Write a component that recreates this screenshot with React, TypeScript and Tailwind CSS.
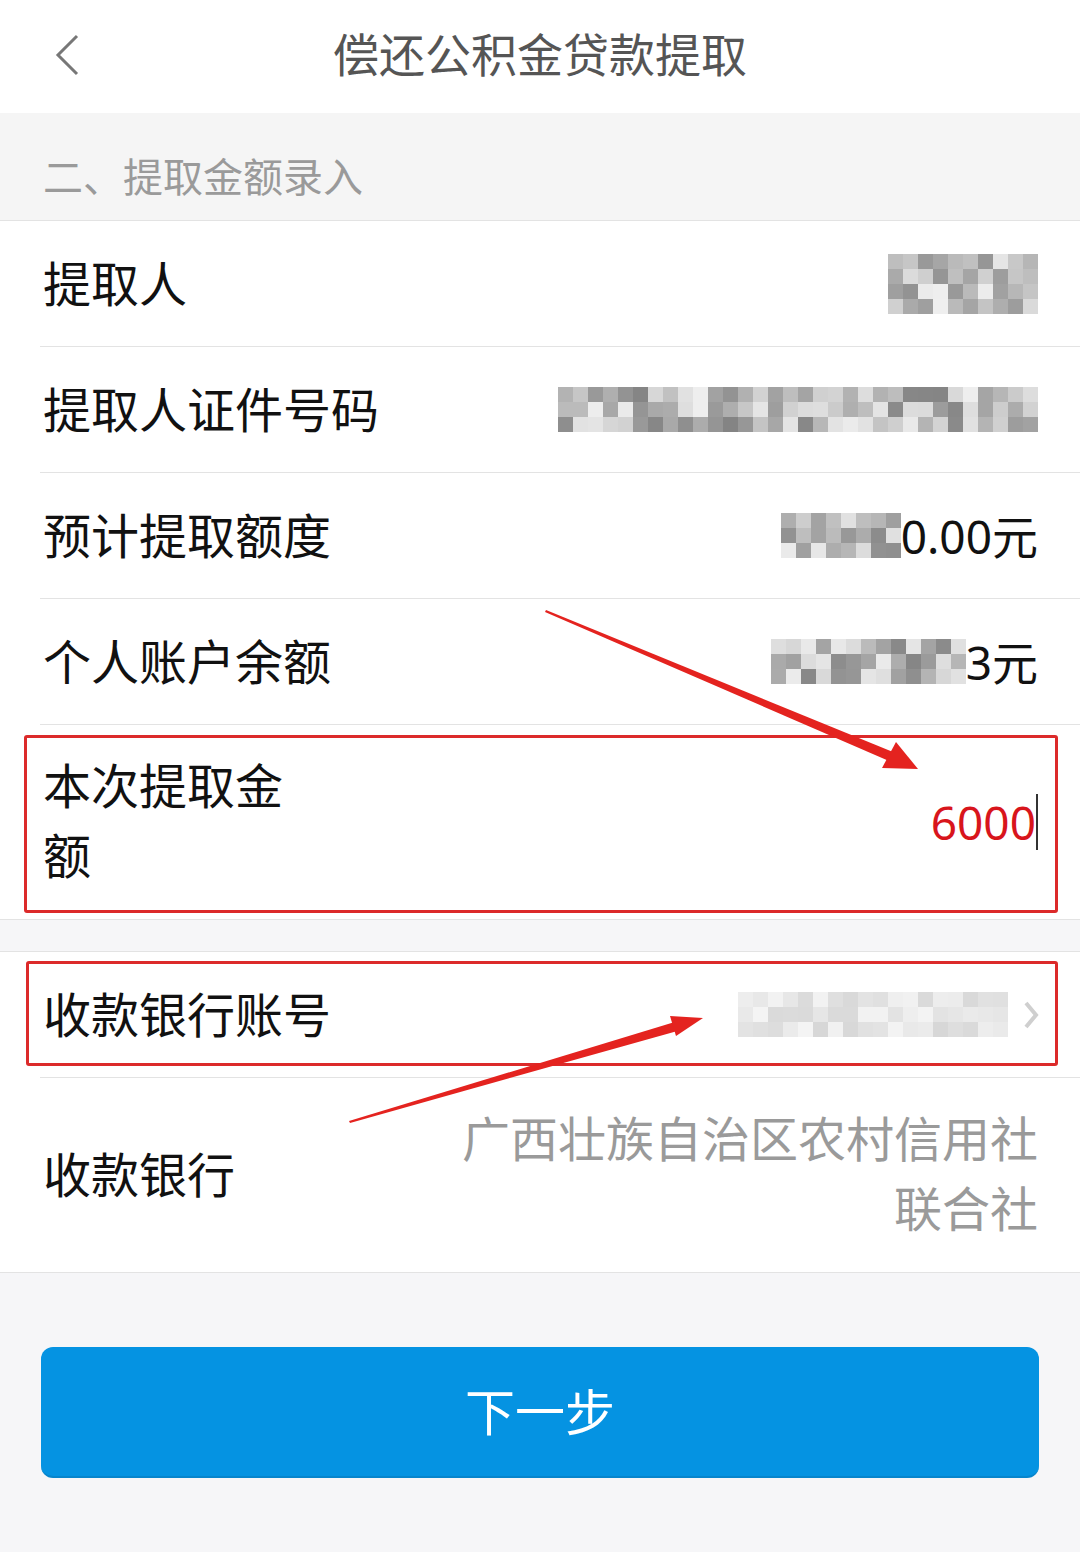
import React from 'react'

const font = { fontFamily: '"Noto Sans", "Noto Sans CJK SC", sans-serif' }

// deterministic grey shades for the pixelated (mosaic) values
function Mosaic({ cols, rows, size, seed, light = false }: { cols: number; rows: number; size: number; seed: number; light?: boolean }) {
  let s = seed
  const rand = () => {
    s = (s * 9301 + 49297) % 233280
    return s / 233280
  }
  const cells: string[] = []
  for (let i = 0; i < cols * rows; i++) {
    const r = rand()
    const v = light ? Math.round(215 + r * 30) : Math.round(130 + r * 110)
    cells.push(`rgb(${v},${v},${v})`)
  }
  return (
    <div className="grid" style={{ gridTemplateColumns: `repeat(${cols}, ${size}px)` }}>
      {cells.map((c, i) => (
        <div key={i} style={{ width: size, height: size, background: c }} />
      ))}
    </div>
  )
}

function Row({ label, children }: { label: React.ReactNode; children?: React.ReactNode }) {
  return (
    <div className="pl-[40px]">
      <div className="h-[126px] flex items-center justify-between pr-[42px] pl-[3px] border-b border-[#e3e3e3]">
        <span className="text-[48px] text-[#111] leading-none">{label}</span>
        {children}
      </div>
    </div>
  )
}

export default function App() {
  return (
    <div className="w-[1080px] h-[1552px] bg-[#f6f6f8] relative overflow-hidden" style={font}>
      {/* Header */}
      <header className="h-[113px] bg-white flex items-center justify-center relative">
        <svg className="absolute left-[52px] top-[33px]" width="30" height="44" viewBox="0 0 30 44">
          <polyline points="25,3 6,22 25,41" fill="none" stroke="#777" strokeWidth="3" />
        </svg>
        <h1 className="text-[46px] text-[#555] leading-none -mt-[6px]">偿还公积金贷款提取</h1>
      </header>

      {/* Section title */}
      <div className="h-[108px] bg-[#f5f5f5] border-b border-[#e3e3e3] flex items-end pb-[23px] px-[43px]">
        <span className="text-[40px] text-[#9a9a9a] leading-none">二、提取金额录入</span>
      </div>

      {/* Form group 1 */}
      <div className="bg-white border-b border-[#e3e3e3]">
        <Row label="提取人">
          <div className="opacity-90">
            <Mosaic cols={10} rows={4} size={15} seed={7} />
          </div>
        </Row>
        <Row label="提取人证件号码">
          <Mosaic cols={32} rows={3} size={15} seed={31} />
        </Row>
        <Row label="预计提取额度">
          <div className="flex items-center">
            <Mosaic cols={8} rows={3} size={15} seed={55} />
            <span className="text-[46px] text-[#111] leading-none">0.00元</span>
          </div>
        </Row>
        <Row label="个人账户余额">
          <div className="flex items-center">
            <Mosaic cols={13} rows={3} size={15} seed={91} />
            <span className="text-[46px] text-[#111] leading-none">3元</span>
          </div>
        </Row>
        <div className="h-[194px] flex items-center justify-between pl-[43px] pr-[42px]">
          <span className="text-[48px] text-[#111] leading-[70px] w-[260px] -mt-[2px]">本次提取金额</span>
          <div className="flex items-center">
            <span className="text-[46px] text-[#d8151c] leading-none">6000</span>
            <span className="w-[2px] h-[56px] bg-[#333]" />
          </div>
        </div>
      </div>

      <div className="h-[32px] border-b border-[#e3e3e3]" />

      {/* Form group 2 */}
      <div className="bg-white border-b border-[#e3e3e3]">
        <Row label="收款银行账号">
          <div className="flex items-center gap-[14px] -mr-[2px]">
            <Mosaic cols={18} rows={3} size={15} seed={13} light />
            <svg width="18" height="32" viewBox="0 0 18 32">
              <polyline points="4,4 14,16 4,28" fill="none" stroke="#cfcfcf" strokeWidth="4" />
            </svg>
          </div>
        </Row>
        <div className="h-[194px] flex items-center justify-between pl-[43px] pr-[42px]">
          <span className="text-[48px] text-[#111] leading-none">收款银行</span>
          <span className="text-[48px] text-[#9a9a9a] leading-[70px] text-right w-[600px] -mt-[2px]">
            广西壮族自治区农村信用社
            <br />
            联合社
          </span>
        </div>
      </div>

      {/* Next button */}
      <div className="px-[41px] pt-[74px]">
        <button className="w-full h-[131px] rounded-[12px] bg-[#0593e2] text-white text-[50px] leading-none border-b-2 border-[#0785cc]" style={font}>
          下一步
        </button>
      </div>

      {/* Red annotation boxes */}
      <div className="absolute left-[24px] top-[735px] w-[1034px] h-[178px] border-[3px] border-[#dc2a2a] rounded-[3px]" />
      <div className="absolute left-[26px] top-[961px] w-[1032px] h-[105px] border-[3px] border-[#dc2a2a] rounded-[3px]" />

      {/* Red arrows */}
      <svg className="absolute inset-0 pointer-events-none" width="1080" height="1552" viewBox="0 0 1080 1552">
        <polygon points="545,612 546,610 893,752 889,761" fill="#e4231f" />
        <polygon points="918,769 882,768 896,742" fill="#e4231f" />
        <polygon points="350,1123 349,1121 678,1021 681,1030" fill="#e4231f" />
        <polygon points="703,1018 676,1036 670,1016" fill="#e4231f" />
      </svg>
    </div>
  )
}
